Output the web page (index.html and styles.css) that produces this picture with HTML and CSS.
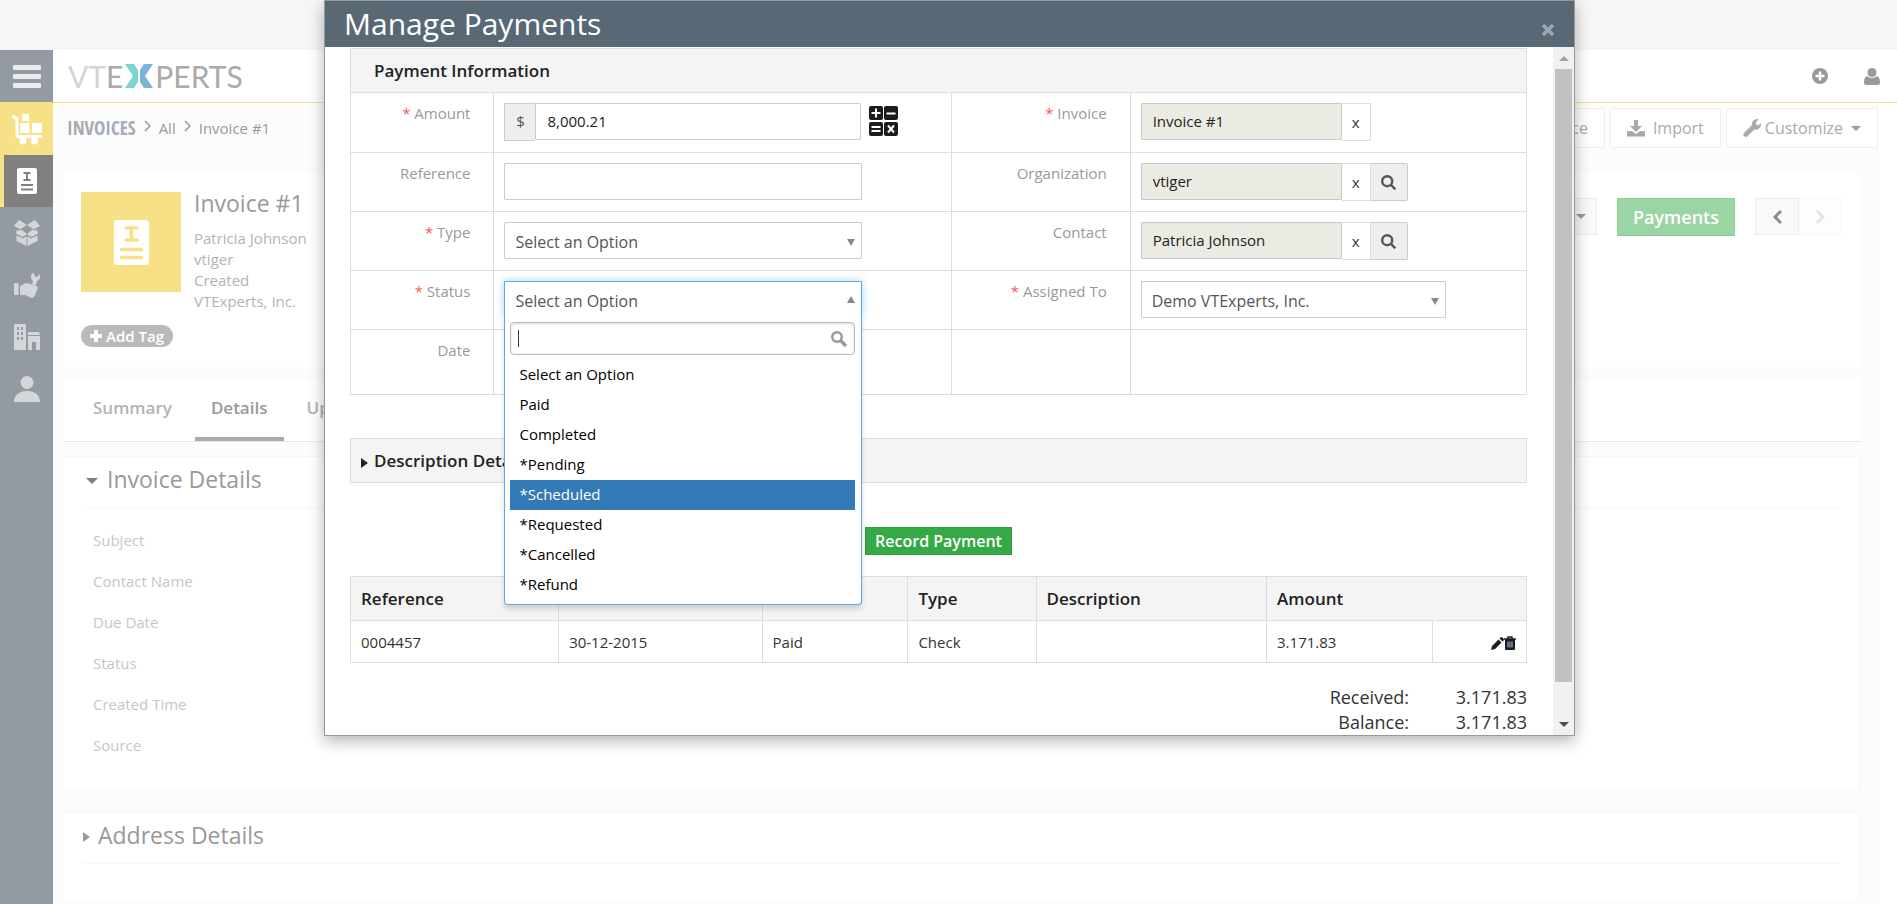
FILE: index.html
```
<!DOCTYPE html>
<html lang="en">
<head>
  <meta charset="utf-8">
  <title>Manage Payments</title>
  <meta name="viewport" content="width=device-width, initial-scale=1.0">
  <link rel="stylesheet" href="styles.css">
</head>
<body>
  <div class="top-strip"></div>

  <div class="app">
    <nav class="sidebar">
      <a href="#" class="side-item menu" aria-label="Menu">
        <svg width="28" height="24" viewBox="0 0 28 24" fill="currentColor"><rect y="1" width="28" height="5" rx="1"/><rect y="10" width="28" height="5" rx="1"/><rect y="19" width="28" height="5" rx="1"/></svg>
      </a>
      <a href="#" class="side-item module" aria-label="Inventory">
        <svg width="32" height="32" viewBox="0 0 32 32" fill="currentColor"><path d="M1 2.500h3.500l3 3V22H31v3H6q-1.500 0-1.500-1.500V7L3 5.500H1z"/><rect x="11" y="1" width="7" height="7"/><rect x="9" y="10" width="9.500" height="10"/><rect x="21" y="10" width="10" height="10"/><circle cx="12" cy="28" r="3.600"/><circle cx="23.500" cy="28" r="3.600"/></svg>
      </a>
      <a href="#" class="side-item active" aria-label="Invoices">
        <svg width="20" height="26" viewBox="0 0 20 26"><rect width="20" height="26" rx="2" fill="#fff"/><path d="M6.500 5h7M6.500 12h7M10 5v7M4 17h12M4 21.500h12" stroke="#808080" stroke-width="2"/></svg>
      </a>
      <a href="#" class="side-item" aria-label="Products">
        <svg width="26" height="26" viewBox="0 0 26 26"><path d="M5 0l8 5-5 5-8-4zM21 0l-8 5 5 5 8-4z" fill="currentColor"/><path d="M13 5l7 4.500-7 4-7-4z" fill="#939aa2"/><path d="M2.500 10.500l5.500-.5 5 4 5-4 5.500.5.500 3-6.500 3.500-4.500-3-4.500 3L2 13.500zM2.500 15.500l6.500 3 3.500-2.500v10L2.500 21zM23.500 15.500l-6.500 3-3.500-2.500v10l10-5z" fill="currentColor"/></svg>
      </a>
      <a href="#" class="side-item" aria-label="Services">
        <svg width="26" height="26" viewBox="0 0 26 26" fill="currentColor"><rect y="11" width="4.500" height="12" rx="1"/><path d="M6 14l6-3 5 1q1 1.500 3 1.500l3 .5q1 1 .5 2.500l-2.500 7q-1 2-3.500 2.500L11 23H6z"/><path d="M19.500.5q-3 2-2.500 5.500.5 2 2 3L18 13l3.500.5L23 9q3-1 3-4.500L25.500 2l-2 3-2.500-.5-1-2z"/></svg>
      </a>
      <a href="#" class="side-item" aria-label="Organizations">
        <svg width="26" height="26" viewBox="0 0 26 26" fill="currentColor" fill-rule="evenodd"><path d="M1 0h10q1 0 1 1v25H0V1q0-1 1-1zM3 3v3h2V3zM7 3v3h2V3zM3 8v3h2V8zM7 8v3h2V8zM3 13v3h2v-3zM7 13v3h2v-3z"/><path d="M14 8h11l1 3H14zM14 12h12v14h-4v-8h-4v8h-4z"/></svg>
      </a>
      <a href="#" class="side-item" aria-label="Contacts">
        <svg width="26" height="26" viewBox="0 0 26 26" fill="currentColor"><circle cx="13" cy="6.500" r="6.500"/><path d="M0 26v-2q2-9 13-9t13 9v2z"/></svg>
      </a>
    </nav>

    <main class="main">
      <header class="header">
        <div class="logo">
          <span class="logo-light">VT</span><span>E</span>
          <svg width="28" height="24" viewBox="0 0 28 24"><path d="M0 0h9l4 6v12l-4 6H0l8-12z" fill="#7cd3cf"/><path d="M28 0h-9l-4 6v12l4 6h9l-8-12z" fill="#78b4d5"/></svg>
          <span>PERTS</span>
        </div>
        <div class="header-icons">
          <a href="#" aria-label="Quick create"><svg width="16" height="16" viewBox="0 0 16 16"><circle cx="8" cy="8" r="8" fill="#999"/><path d="M8 3.500v9M3.500 8h9" stroke="#fff" stroke-width="2.500"/></svg></a>
          <a href="#" aria-label="User"><svg width="16" height="17" viewBox="0 0 16 17" fill="#999"><circle cx="8" cy="4.500" r="4.500"/><path d="M3 8q5 4 10 0 3 1.500 3 6v1q0 2-2 2H2q-2 0-2-2v-1q0-4.500 3-6z"/></svg></a>
        </div>
      </header>

      <div class="module-bar">
        <div class="crumbs">
          <a href="#" class="module-name">INVOICES</a>
          <svg class="chevron" width="7" height="12" viewBox="0 0 7 12"><path d="M1 1l5 5-5 5" fill="none" stroke="#999" stroke-width="1.500"/></svg>
          <a href="#">All</a>
          <svg class="chevron" width="7" height="12" viewBox="0 0 7 12"><path d="M1 1l5 5-5 5" fill="none" stroke="#999" stroke-width="1.500"/></svg>
          <a href="#">Invoice #1</a>
        </div>
        <div class="bar-actions">
          <button type="button" class="bar-btn">Add Invoice</button>
          <button type="button" class="bar-btn import"><svg width="18" height="17" viewBox="0 0 18 17" fill="#aaa"><path d="M7 0h4v6h4l-6 6-6-6h4z"/><path d="M0 11h5l4 3 4-3h5v5.500H0z"/></svg>Import</button>
          <button type="button" class="bar-btn customize"><svg width="18" height="18" viewBox="0 0 18 18" fill="#aaa"><path d="M1 14l8-8q-.5-4 3-5.500 2-.8 4 0l-3 2.500v2.500l2.500 1L18 4q.5 4-2.500 6-2 1.300-4 .5L4 17.500q-1.500 1-3-.5t0-3z"/></svg>Customize<span class="caret"></span></button>
        </div>
      </div>

      <div class="content">
        <section class="card summary">
          <div class="summary-left">
            <div class="record">
              <div class="record-image">
                <svg width="35" height="45" viewBox="0 0 35 45"><rect width="35" height="45" rx="3" fill="#fff"/><path d="M12 8h11M12 20h11M17.500 8v12M7.500 29.500h20M7.500 37.500h20" stroke="#f8e087" stroke-width="3.500" stroke-linecap="round"/></svg>
              </div>
              <div>
                <h1 class="record-title">Invoice #1</h1>
                <ul class="record-info">
                  <li>Patricia Johnson</li>
                  <li>vtiger</li>
                  <li>Created</li>
                  <li>VTExperts, Inc.</li>
                </ul>
              </div>
            </div>
            <button type="button" class="add-tag"><svg width="12" height="12" viewBox="0 0 12 12"><path d="M6 0v12M0 6h12" stroke="#fff" stroke-width="4"/></svg>Add Tag</button>
          </div>
          <div class="summary-actions">
            <button type="button" class="grey-btn">More<span class="caret"></span></button>
            <button type="button" class="payments-btn">Payments</button>
            <div class="pager">
              <button type="button" class="grey-btn" aria-label="Previous"><svg width="9" height="14" viewBox="0 0 9 14"><path d="M8 1L2 7l6 6" fill="none" stroke="#8c8c8c" stroke-width="3"/></svg></button>
              <button type="button" class="grey-btn disabled" aria-label="Next" disabled><svg width="9" height="14" viewBox="0 0 9 14"><path d="M1 1l6 6-6 6" fill="none" stroke="#e4e4e4" stroke-width="3"/></svg></button>
            </div>
          </div>
        </section>

        <div class="tabs">
          <a href="#" class="tab">Summary</a>
          <a href="#" class="tab current">Details</a>
          <a href="#" class="tab">Updates</a>
        </div>

        <section class="card block">
          <h2 class="block-title"><span class="arrow-down"></span>Invoice Details</h2>
          <ul class="fields">
            <li>Subject</li>
            <li>Contact Name</li>
            <li>Due Date</li>
            <li>Status</li>
            <li>Created Time</li>
            <li>Source</li>
          </ul>
        </section>

        <section class="card block">
          <h2 class="block-title closed"><span class="arrow-right"></span>Address Details</h2>
        </section>
      </div>
    </main>
  </div>

  <div class="modal" role="dialog" aria-label="Manage Payments">
    <div class="modal-header">
      <h2>Manage Payments</h2>
      <button type="button" class="close" aria-label="Close"><svg width="14" height="14" viewBox="0 0 14 14"><path d="M2 2l10 10M12 2L2 12" stroke="#9ca6af" stroke-width="3.500"/></svg></button>
    </div>
    <div class="modal-main">
      <div class="modal-body">
        <h3 class="section-title">Payment Information</h3>
        <table class="form-table">
          <colgroup><col class="col-label"><col class="col-value"><col class="col-label-right"><col></colgroup>
          <tr class="first">
            <th><span class="req">*</span> <label for="amount">Amount</label></th>
            <td>
              <div class="group">
                <span class="addon">$</span>
                <input type="text" id="amount" class="control" value="8,000.21">
                <svg class="calc" width="29" height="30" viewBox="0 0 29 30"><g fill="#1c1c1c"><rect width="14" height="14" rx="2"/><rect x="15" width="14" height="14" rx="2"/><rect y="16" width="14" height="14" rx="2"/><rect x="15" y="16" width="14" height="14" rx="2"/></g><path d="M7 2.500v9M2.500 7h9M17.500 7.500h9M2.500 21h9M2.500 25h9M19 19.500l6 7M25 19.500l-6 7" stroke="#fff" stroke-width="2"/></svg>
              </div>
            </td>
            <th><span class="req">*</span> <label for="invoice">Invoice</label></th>
            <td>
              <div class="group">
                <input type="text" id="invoice" class="control lookup" value="Invoice #1" readonly>
                <button type="button" class="clear">x</button>
              </div>
            </td>
          </tr>
          <tr>
            <th><label for="reference">Reference</label></th>
            <td><input type="text" id="reference" class="control wide"></td>
            <th><label for="organization">Organization</label></th>
            <td>
              <div class="group">
                <input type="text" id="organization" class="control lookup" value="vtiger" readonly>
                <button type="button" class="clear">x</button>
                <button type="button" class="search" aria-label="Search"><svg width="15" height="15" viewBox="0 0 15 15" fill="none" stroke="#555" stroke-width="2.400"><circle cx="6.200" cy="6.200" r="5"/><path d="M10 10l4.300 4.300"/></svg></button>
              </div>
            </td>
          </tr>
          <tr>
            <th><span class="req">*</span> <label for="type">Type</label></th>
            <td><div class="select wide"><select id="type" class="control"><option>Select an Option</option></select></div></td>
            <th><label for="contact">Contact</label></th>
            <td>
              <div class="group">
                <input type="text" id="contact" class="control lookup" value="Patricia Johnson" readonly>
                <button type="button" class="clear">x</button>
                <button type="button" class="search" aria-label="Search"><svg width="15" height="15" viewBox="0 0 15 15" fill="none" stroke="#555" stroke-width="2.400"><circle cx="6.200" cy="6.200" r="5"/><path d="M10 10l4.300 4.300"/></svg></button>
              </div>
            </td>
          </tr>
          <tr>
            <th><span class="req">*</span> <label for="status">Status</label></th>
            <td>
              <div class="select wide open">
                <select id="status" class="control"><option>Select an Option</option></select>
                <div class="dropdown">
                  <div class="dropdown-search">
                    <span class="cursor"></span>
                    <input type="text" aria-label="Search options">
                    <svg width="16" height="16" viewBox="0 0 16 16" fill="none" stroke="#999"><circle cx="6" cy="6" r="4.800" stroke-width="2.400"/><path d="M9.500 9.500l5.500 5.500" stroke-width="3.400"/></svg>
                  </div>
                  <ul role="listbox">
                    <li role="option">Select an Option</li>
                    <li role="option">Paid</li>
                    <li role="option">Completed</li>
                    <li role="option">*Pending</li>
                    <li role="option" class="highlighted">*Scheduled</li>
                    <li role="option">*Requested</li>
                    <li role="option">*Cancelled</li>
                    <li role="option">*Refund</li>
                  </ul>
                </div>
              </div>
            </td>
            <th><span class="req">*</span> <label for="assigned">Assigned To</label></th>
            <td><div class="select assigned"><select id="assigned" class="control"><option>Demo VTExperts, Inc.</option></select></div></td>
          </tr>
          <tr class="last">
            <th>Date</th>
            <td></td>
            <th></th>
            <td></td>
          </tr>
        </table>

        <h3 class="section-title description"><span class="arrow-right"></span>Description Details</h3>

        <div class="submit">
          <button type="button" class="record-btn">Record Payment</button>
        </div>

        <table class="payments">
          <colgroup><col class="c-ref"><col class="c-date"><col class="c-status"><col class="c-type"><col class="c-desc"><col class="c-amount"><col></colgroup>
          <thead>
            <tr><th>Reference</th><th>Date</th><th>Status</th><th>Type</th><th>Description</th><th colspan="2">Amount</th></tr>
          </thead>
          <tbody>
            <tr>
              <td>0004457</td><td>30-12-2015</td><td>Paid</td><td>Check</td><td></td><td>3.171.83</td>
              <td class="row-actions">
                <a href="#" aria-label="Edit"><svg width="13" height="13" viewBox="0 0 13 13" fill="#1c1c28"><path d="M0 13l1-4 6.500-6.500 3 3L4 12zM8.500 1.500L10 0q1 0 2 1t1 2l-1.500 1.500z"/></svg></a><a href="#" aria-label="Delete"><svg width="12" height="14" viewBox="0 0 12 14"><path d="M4 2.500V1h4v1.500M0 3h12" fill="none" stroke="#1c1c28" stroke-width="1.500"/><path d="M1 3h10v10q0 1-1 1H2q-1 0-1-1z" fill="#1c1c28"/><path d="M4 5.500v6M6 5.500v6M8 5.500v6" stroke="#a9c4dd"/></svg></a>
              </td>
            </tr>
          </tbody>
        </table>

        <dl class="totals">
          <dt>Received:</dt><dd>3.171.83</dd>
          <dt>Balance:</dt><dd>3.171.83</dd>
        </dl>
      </div>
      <div class="scrollbar">
        <span class="scroll-up"></span>
        <div class="thumb"></div>
        <span class="scroll-down"></span>
      </div>
    </div>
  </div>
</body>
</html>
```
FILE: styles.css
```
* {
  box-sizing: border-box;
}

body {
  display: flex;
  flex-direction: column;
  margin: 0;
  height: 100vh;
  overflow: hidden;
  font-family: "Open Sans", "Noto Sans", sans-serif;
  font-size: 15px;
  color: #333;
  background: #fff;
}

h1, h2, h3, ul, dl, dd {
  margin: 0;
  padding: 0;
  font-weight: 400;
}

ul {
  list-style: none;
}

a {
  color: inherit;
  text-decoration: none;
}

button, input, select {
  font-family: inherit;
  font-size: 15px;
}

svg {
  display: block;
  flex: none;
}

/* page behind the dialog */

.top-strip {
  flex: none;
  height: 50px;
  background: #f6f6f6;
}

.app {
  display: flex;
  flex: 1;
  min-height: 0;
  overflow: hidden;
}

.sidebar {
  width: 53px;
  flex: none;
  background: #939aa2;
}

.side-item {
  display: flex;
  align-items: center;
  justify-content: center;
  height: 52px;
  color: #d4d7da;
}

.side-item.menu {
  color: #e9ebec;
}

.side-item.module {
  height: 53px;
  background: #f8e087;
  color: #fff;
}

.side-item.active {
  border-left: 4px solid #f8e087;
  padding-right: 4px;
  background: #808080;
}

.main {
  display: flex;
  flex-direction: column;
  flex: 1;
  min-width: 0;
}

.header {
  display: flex;
  flex: none;
  justify-content: space-between;
  align-items: center;
  height: 53px;
  padding: 0 17px 0 15px;
  border-bottom: 1px solid #f8e087;
}

.logo {
  display: flex;
  align-items: center;
  font-family: Lato, "Open Sans", sans-serif;
  font-size: 30px;
  color: #aaa;
}

.logo svg {
  margin: 0 2px;
}

.logo-light {
  color: #d4d4d4;
}

.header-icons {
  display: flex;
  gap: 36px;
}

.module-bar {
  display: flex;
  flex: none;
  justify-content: space-between;
  height: 51px;
  margin-right: 19px;
  padding: 5px 0 0 14px;
  background: #fcfcfc;
}

.crumbs {
  display: flex;
  align-items: center;
  height: 40px;
  color: #999;
}

.module-name {
  font-family: "Open Sans Condensed", "Liberation Sans Narrow", sans-serif;
  font-size: 19px;
  color: #a4acb4;
}

.chevron {
  margin: 0 8px 4px;
}

.bar-actions {
  display: flex;
  gap: 5px;
}

.bar-btn {
  display: flex;
  align-items: center;
  height: 40px;
  padding: 0 16px;
  border: 1px solid #eee;
  border-radius: 2px;
  background: #fff;
  color: #aaa;
  font-size: 16px;
}

.bar-btn.import svg {
  margin-right: 8px;
}

.bar-btn.customize svg {
  margin-right: 4px;
}

.caret {
  margin-left: 8px;
  border: 5px solid transparent;
  border-top-color: #999;
  border-bottom: 0;
}

.content {
  flex: 1;
  min-height: 0;
  margin-right: 18px;
  padding: 19px 19px 0 10px;
  overflow: hidden;
  background: #fcfcfc;
}

.card {
  background: #fff;
}

.summary {
  display: flex;
  justify-content: space-between;
  height: 194px;
  margin-bottom: 12px;
  padding: 19px 18px;
}

.record {
  display: flex;
  gap: 13px;
  margin-bottom: 13px;
}

.record-image {
  display: flex;
  align-items: center;
  justify-content: center;
  width: 100px;
  height: 100px;
  background: #f8e087;
}

.record-title {
  font-size: 23px;
  line-height: 22px;
  margin-bottom: 14px;
  color: #999;
}

.record-info {
  line-height: 21px;
  color: #b3b3b3;
}

.add-tag {
  display: flex;
  align-items: center;
  gap: 4px;
  height: 22px;
  padding: 0 9px;
  border: 0;
  border-radius: 11px;
  background: #bababa;
  color: #fff;
  font-weight: 600;
}

.summary-actions {
  display: flex;
  align-items: flex-start;
  gap: 20px;
  padding-top: 6px;
}

.grey-btn {
  display: flex;
  align-items: center;
  justify-content: center;
  min-width: 44px;
  height: 37px;
  padding: 0 10px;
  border: 1px solid #ececec;
  background: #f9f9f9;
  color: #999;
}

.grey-btn.disabled {
  min-width: 43px;
  border-color: #f7f7f7;
  border-left: 0;
  background: #fdfdfd;
}

.payments-btn {
  height: 38px;
  padding: 0 15px;
  border: 1px solid #8dcb97;
  background: #9bd5a4;
  color: #fff;
  font-size: 18px;
  font-weight: 600;
}

.pager {
  display: flex;
}

.tabs {
  display: flex;
  height: 63px;
  padding: 0 8px;
  margin-bottom: 14px;
  border-bottom: 1px solid #e8e8e8;
  background: #fff;
}

.tab {
  height: 62px;
  padding: 17px 16px 0;
  margin-right: 7px;
  border-bottom: 4px solid transparent;
  color: #b3b3b3;
  font-size: 17px;
  font-weight: 600;
}

.tab:first-child {
  padding: 17px 16px 0 22px;
}

.tab.current {
  border-bottom-color: #aaa;
  color: #999;
}

.block {
  padding: 0 19px 24px;
  margin-bottom: 21px;
  border: 1px solid #f8f8f8;
}

.block-title {
  display: flex;
  align-items: center;
  gap: 9px;
  height: 51px;
  padding: 0 0 6px 3px;
  border-bottom: 1px solid #f6f6f6;
  font-size: 23px;
  color: #999;
}

.block-title.closed {
  gap: 8px;
  padding-left: 0;
  margin-bottom: 12px;
}

.arrow-down {
  margin-top: 4px;
  border: 6px solid transparent;
  border-top-color: #808080;
  border-bottom: 0;
}

.arrow-right {
  margin-top: 4px;
  border: 5px solid transparent;
  border-left: 7px solid currentColor;
  border-right: 0;
}

.fields {
  padding: 12px 10px 0;
  color: #c6c6c6;
}

.fields li {
  line-height: 41px;
}

/* dialog */

.modal {
  position: absolute;
  top: 0;
  left: 324px;
  right: 322px;
  border: 1px solid #999;
  background: #fff;
  box-shadow: 0 5px 15px rgba(0, 0, 0, 0.3);
}

.modal-header {
  display: flex;
  justify-content: space-between;
  align-items: center;
  height: 46px;
  padding: 0 19px;
  background: #596875;
}

.modal-header h2 {
  color: #fff;
  font-size: 30px;
  line-height: 44px;
}

.close {
  padding: 12px 0 0;
  border: 0;
  background: none;
}

.modal-main {
  display: flex;
  height: 688px;
  overflow: hidden;
}

.modal-body {
  flex: 1;
  min-width: 0;
  padding: 1px 26px 0 25px;
  overflow: hidden;
}

.section-title {
  display: flex;
  align-items: center;
  height: 45px;
  padding: 0 23px;
  border: 1px solid #ddd;
  background: #f4f4f4;
  color: #222;
  font-size: 17px;
  font-weight: 600;
}

.section-title.description {
  gap: 6px;
  margin-top: 43px;
  padding-left: 10px;
}

.form-table {
  width: 100%;
  margin-top: -1px;
  table-layout: fixed;
  border-collapse: collapse;
}

.col-label { width: 12.2%; }
.col-value { width: 38.9%; }
.col-label-right { width: 15.2%; }

.form-table th,
.form-table td {
  height: 59px;
  padding: 10px;
  border: 1px solid #ddd;
  vertical-align: top;
}

.form-table th {
  padding-right: 23px;
  color: #999;
  font-weight: 400;
  line-height: 20px;
  text-align: right;
}

.form-table .first th {
  height: 60px;
}

.form-table .last th {
  height: 65px;
}

.req {
  color: #f55;
}

.group {
  display: flex;
}

.control {
  height: 37px;
  padding: 0 11px 2px;
  border: 1px solid #ccc;
  border-radius: 1px;
  background: #fff;
  color: #222;
}

.wide {
  display: block;
  width: 358px;
}

.addon {
  display: flex;
  align-items: center;
  justify-content: center;
  width: 31px;
  height: 38px;
  padding-bottom: 2px;
  border: 1px solid #ccc;
  border-right: 0;
  background: #eee;
  color: #555;
}

#amount {
  width: 326px;
}

.calc {
  margin: 3px 0 0 8px;
}

.lookup {
  width: 201px;
  border-color: #c8c8c8;
  background: #ebebe4;
}

.clear {
  width: 29px;
  height: 38px;
  padding: 0;
  border: 1px solid #ddd;
  border-left: 0;
  background: #fff;
  color: #333;
}

.search {
  display: flex;
  align-items: center;
  justify-content: center;
  width: 37px;
  height: 38px;
  border: 1px solid #ccc;
  border-left: 0;
  border-radius: 0 2px 2px 0;
  background: #eee;
}

.select {
  position: relative;
}

.select .control {
  width: 100%;
  padding: 2px 10px 0;
  appearance: none;
  color: #555;
  font-size: 16px;
}

.select::after {
  content: "";
  position: absolute;
  top: 17px;
  right: 7px;
  border: 4px solid transparent;
  border-top: 7px solid #888;
  border-bottom: 0;
}

.assigned {
  width: 305px;
}

.select.open .control {
  border-color: #5fa8e0;
  border-bottom-color: transparent;
  box-shadow: 0 0 8px rgba(82, 168, 236, 0.5);
}

.select.open::after {
  top: 15px;
  border-top: 0;
  border-bottom: 7px solid #888;
}

.dropdown {
  position: absolute;
  top: 36px;
  left: 0;
  right: 0;
  z-index: 2;
  padding: 5px 6px 4px 5px;
  border: 1px solid #5fa8e0;
  border-top: 0;
  border-radius: 0 0 4px 4px;
  background: #fff;
  box-shadow: 0 4px 5px rgba(0, 0, 0, 0.15);
}

.dropdown-search {
  display: flex;
  align-items: center;
  height: 33px;
  margin-bottom: 5px;
  padding: 0 7px;
  border: 1px solid #bbb;
  border-radius: 4px;
  box-shadow: inset 0 1px 3px rgba(0, 0, 0, 0.15);
}

.cursor {
  width: 1px;
  height: 17px;
  background: #333;
}

.dropdown-search input {
  flex: 1;
  border: 0;
  outline: 0;
  background: none;
}

.dropdown li {
  height: 30px;
  padding: 0 9px;
  color: #000;
  line-height: 29px;
}

.dropdown li.highlighted {
  background: #337ab7;
  color: #fff;
}

.submit {
  display: flex;
  justify-content: center;
  padding: 44px 0 21px;
}

.record-btn {
  height: 28px;
  padding: 0 9px;
  border: 1px solid #2f9a40;
  background: #36a947;
  color: #fff;
  font-size: 16px;
  font-weight: 600;
}

.payments {
  width: 100%;
  table-layout: fixed;
  border-collapse: collapse;
}

.c-ref { width: 17.7%; }
.c-date { width: 17.3%; }
.c-status { width: 12.4%; }
.c-type { width: 10.9%; }
.c-desc { width: 19.6%; }
.c-amount { width: 14.1%; }

.payments th,
.payments td {
  height: 42px;
  padding: 0 10px;
  border: 1px solid #ddd;
  text-align: left;
}

.payments th {
  height: 44px;
  background: #f4f4f4;
  color: #222;
  font-size: 17px;
  font-weight: 600;
}

.row-actions a {
  display: inline-block;
  vertical-align: middle;
}

.payments .row-actions {
  text-align: right;
}

.totals {
  display: grid;
  grid-template-columns: 1fr 118px;
  margin-top: 22px;
  font-size: 18px;
  line-height: 25px;
  text-align: right;
}

.scrollbar {
  display: flex;
  flex-direction: column;
  align-items: center;
  width: 21px;
  padding: 9px 0 8px;
  background: #f1f1f1;
}

.scroll-up {
  border: 5px solid transparent;
  border-top: 0;
  border-bottom-color: #a3a3a3;
  margin-bottom: 8px;
}

.thumb {
  width: 17px;
  height: 613px;
  background: #c1c1c1;
}

.scroll-down {
  margin-top: auto;
  border: 5px solid transparent;
  border-top-color: #505050;
  border-bottom: 0;
}
```
